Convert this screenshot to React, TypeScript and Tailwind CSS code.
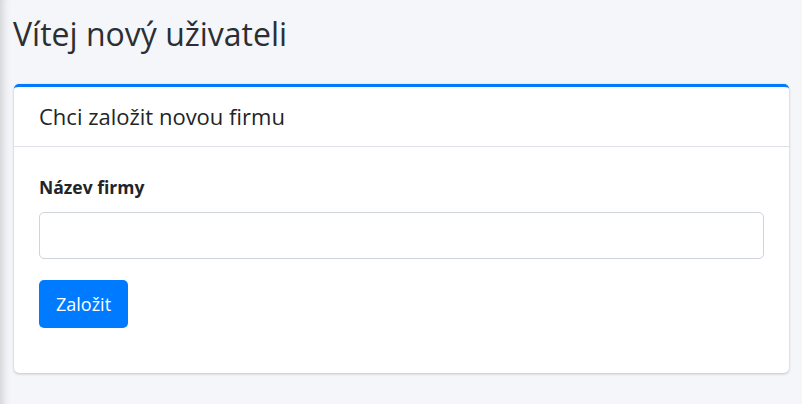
import React from "react";

export default function App() {
  return (
    <div
      className="min-h-[404px] w-full bg-[#f4f6f9] text-[#212529] shadow-[inset_10px_0_10px_-8px_rgba(0,0,0,0.18)]"
      style={{ fontFamily: '"Open Sans", "Noto Sans", sans-serif' }}
    >
      <div className="pl-[13px] pr-[13px] pt-[12px]">
        <h1 className="text-[32px] leading-[43px] font-normal text-[#2b2f33]">Vítej nový uživateli</h1>
      </div>
      <div className="pl-[14px] pr-[13px] pt-[29px]">
        <div className="rounded-[5px] border-t-[3px] border-[#007bff] bg-white shadow-[0_0_1px_rgba(0,0,0,0.125),0_1px_3px_rgba(0,0,0,0.2)]">
          <div className="flex h-[60px] items-center border-b border-[#dee2e6] px-[25px]">
            <h3 className="text-[22px] font-normal">Chci založit novou firmu</h3>
          </div>
          <div className="px-[25px] pb-[25px] pt-[25px]">
            <div className="mb-[20px]">
              <label className="mb-[10px] block h-[30px] text-[17.5px] font-bold leading-[30px]">Název firmy</label>
              <input
                type="text"
                className="block h-[47px] w-full rounded-[5px] border border-[#ced4da] bg-white px-[15px] text-[18px] outline-none"
              />
            </div>
            <div className="mb-[20px] pt-[1px]">
              <button className="h-[48px] rounded-[5px] bg-[#007bff] px-[17px] text-[18px] text-white">Založit</button>
            </div>
          </div>
        </div>
      </div>
    </div>
  );
}
